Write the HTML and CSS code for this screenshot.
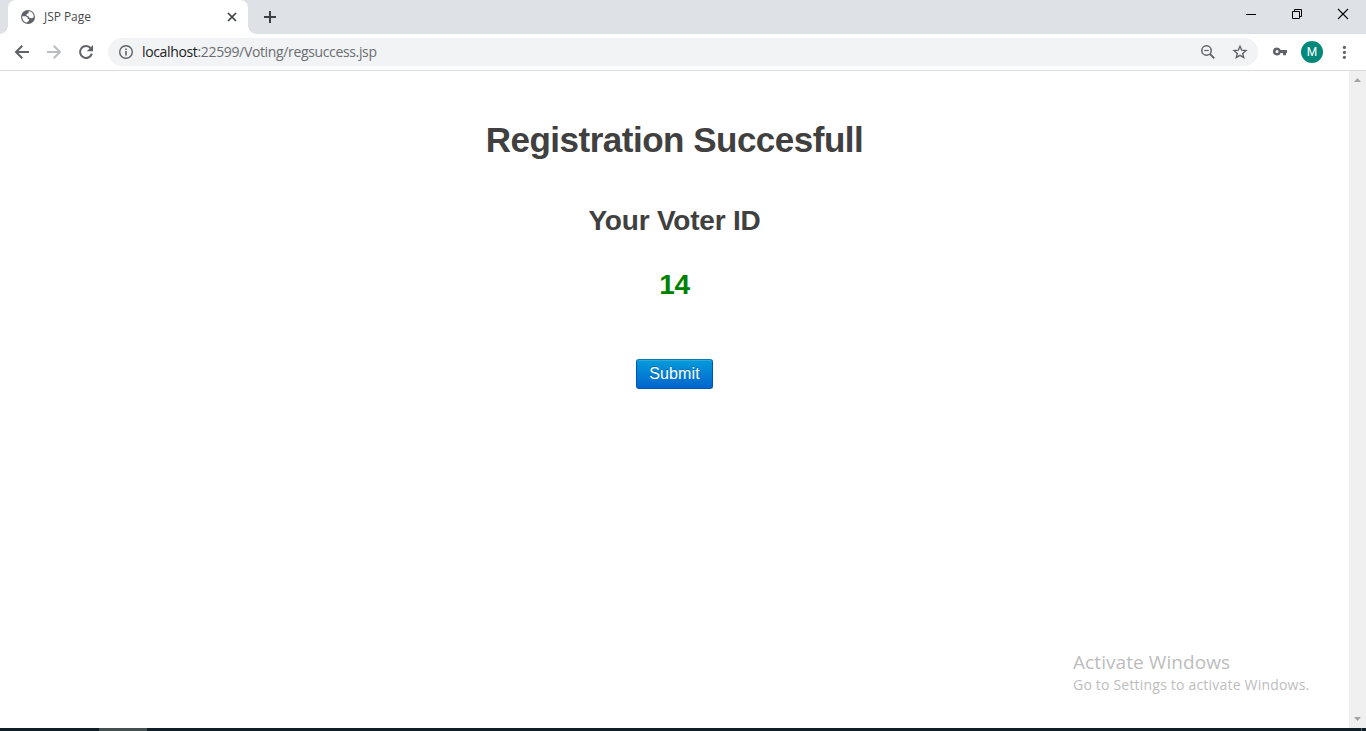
FILE: index.html
```html
<!DOCTYPE html>
<html lang="en">
<head>
<meta charset="utf-8">
<title>JSP Page</title>
<link rel="stylesheet" href="styles.css">
</head>
<body>
<div class="browser">
  <header class="tabstrip">
    <div class="tab">
      <svg class="globe" width="16" height="16" viewBox="0 0 16 16"><circle cx="8" cy="8" r="7" fill="#5f6368"/><path d="M8.700 2.300C11 2.200 13.300 4.200 13.700 6.500L13.500 8.500L11.700 9.200L9.200 8.800L8.400 7.200L6.500 6.700L6.700 5L8.500 4.300ZM2.200 7.200H5.500L7.500 8.300L7.700 9.700L9.300 10.400L8.800 11.800L7 13.600C4.300 13.300 2 11 2.200 7.200Z" fill="#fff"/></svg>
      <span class="tab-title">JSP Page</span>
      <svg class="tab-close" width="10" height="10" viewBox="0 0 10 10"><path d="M1 1L9 9M9 1L1 9" stroke="#3c4043" stroke-width="1.7"/></svg>
    </div>
    <svg class="new-tab" width="12" height="12" viewBox="0 0 12 12"><path d="M6 0V12M0 6H12" stroke="#3c4043" stroke-width="2"/></svg>
    <div class="window-controls">
      <svg width="46" height="30" viewBox="0 0 46 30"><path d="M18 14.5H28" stroke="#000"/></svg>
      <svg width="46" height="30" viewBox="0 0 46 30"><path d="M18.500 11.500H25.500V18.500H18.500ZM20.500 11V9.500H27.500V16.500H26" fill="none" stroke="#000"/></svg>
      <svg width="46" height="30" viewBox="0 0 46 30"><path d="M18 9L28 19M28 9L18 19" stroke="#000" stroke-width="1.1"/></svg>
    </div>
  </header>
  <nav class="toolbar">
    <svg class="nav-icon" width="16" height="16" viewBox="0 0 16 16"><path d="M15 8H2.500M8.300 1.700L2 8L8.300 14.300" fill="none" stroke="#5f6368" stroke-width="2"/></svg>
    <svg class="nav-icon" width="16" height="16" viewBox="0 0 16 16"><path d="M1 8H13.500M7.700 1.700L14 8L7.700 14.300" fill="none" stroke="#babcbe" stroke-width="2"/></svg>
    <svg class="nav-icon" width="16" height="16" viewBox="0 0 16 16"><path d="M12.800 4.300A6 6 0 1 0 13.800 9.600" fill="none" stroke="#5f6368" stroke-width="2"/><path d="M15 1V7.200H8.800Z" fill="#5f6368"/></svg>
    <div class="address">
      <svg width="16" height="16" viewBox="0 0 16 16"><circle cx="8" cy="8" r="6.300" fill="none" stroke="#5f6368" stroke-width="1.400"/><path d="M8 7V11.500M8 4.500V6" stroke="#5f6368" stroke-width="1.600"/></svg>
      <span class="url"><span class="host">localhost</span>:22599/Voting/regsuccess.jsp</span>
      <svg class="zoom-icon" width="16" height="16" viewBox="0 0 16 16"><circle cx="6.500" cy="6.500" r="4.700" fill="none" stroke="#5f6368" stroke-width="1.500"/><path d="M4.200 6.500H8.800" stroke="#5f6368" stroke-width="1.200"/><path d="M10 10L14.300 14.300" stroke="#5f6368" stroke-width="1.800"/></svg>
      <svg class="star" width="16" height="16" viewBox="0 0 16 16"><path d="M8 2.200L9.700 6.200L14 6.600L10.700 9.400L11.700 13.600L8 11.400L4.300 13.600L5.300 9.400L2 6.600L6.300 6.200Z" fill="none" stroke="#5f6368" stroke-width="1.400"/></svg>
    </div>
    <svg class="key" width="16" height="16" viewBox="0 0 16 16"><path fill-rule="evenodd" d="M5 3.500A4 4 0 1 0 8.700 9H11V11.300H14V9H15V6H8.700A4 4 0 0 0 5 3.500ZM5 6A1.500 1.500 0 1 1 5 9A1.500 1.500 0 1 1 5 6Z" fill="#5f6368"/></svg>
    <span class="avatar">M</span>
    <svg class="menu" width="4" height="14" viewBox="0 0 4 14" fill="#5f6368"><circle cx="2.400" cy="2.400" r="1.600"/><circle cx="2.400" cy="7.400" r="1.600"/><circle cx="2.400" cy="12.300" r="1.600"/></svg>
  </nav>
  <div class="viewport">
    <main class="page">
      <h1>Registration Succesfull</h1>
      <h2>Your Voter ID</h2>
      <h2 class="voter-id">14</h2>
      <button class="submit">Submit</button>
    </main>
    <div class="scrollbar">
      <svg width="17" height="17" viewBox="0 0 17 17"><path d="M5 11L8.500 7L12 11Z" fill="#a3a3a3"/></svg>
      <svg width="17" height="17" viewBox="0 0 17 17"><path d="M5 6L8.500 10L12 6Z" fill="#a3a3a3"/></svg>
    </div>
  </div>
  <footer class="taskbar"><span class="task-active"></span><span class="show-desktop"></span></footer>
  <aside class="watermark">
    <div class="wm-title">Activate Windows</div>
    <div class="wm-text">Go to Settings to activate Windows.</div>
  </aside>
</div>
</body>
</html>
```
FILE: styles.css
```css
* { box-sizing: border-box; }
body { margin: 0; font-family: "Liberation Sans", Arial, sans-serif; }
svg { display: block; flex: none; }
.browser { position: relative; width: 1366px; height: 731px; display: flex; flex-direction: column; background: #fff; overflow: hidden; }
.tabstrip { height: 34px; flex: none; display: flex; background: #dee1e6; padding-left: 8px; }
.tab { position: relative; width: 240px; height: 34px; display: flex; align-items: center; padding: 0 11px 0 12px; background: #fff; border-radius: 8px 8px 0 0; }
.tab::before, .tab::after { content: ""; position: absolute; bottom: 0; width: 8px; height: 8px; }
.tab::before { left: -8px; background: radial-gradient(circle at 0 0, transparent 7.5px, #fff 8px); }
.tab::after { right: -8px; background: radial-gradient(circle at 100% 0, transparent 7.5px, #fff 8px); }
.tab-title { margin-left: 8px; font: 12px/16px "Open Sans", sans-serif; letter-spacing: -0.05px; color: #45494d; }
.tab-close { margin-left: auto; }
.new-tab { margin: 11px 0 0 16px; }
.window-controls { display: flex; margin-left: auto; }
.toolbar { height: 37px; flex: none; display: flex; align-items: center; padding: 0 20px 0 14px; border-bottom: 1px solid #dadce0; }
.nav-icon { margin-right: 16px; }
.address { width: 1150px; height: 28px; margin-left: -2px; display: flex; align-items: center; padding: 0 10px; background: #f1f3f4; border-radius: 14px; }
.url { margin-left: 8px; font: 14px/20px "Open Sans", sans-serif; letter-spacing: -0.35px; color: #6a6e72; }
.host { color: #202124; }
.zoom-icon { margin-left: auto; }
.star { margin-left: 16px; }
.key { margin-left: 14px; }
.avatar { width: 22px; height: 22px; margin-left: 13px; border-radius: 50%; background: #00897b; color: #fff; font: 12px/22px Roboto, sans-serif; text-align: center; }
.menu { margin-left: auto; }
.viewport { flex: 1; display: flex; }
.page { flex: 1; display: flex; flex-direction: column; align-items: center; color: #404040; }
h1 { margin: 48px 0 0; font-size: 35px; line-height: 42px; letter-spacing: -0.5px; }
h2 { margin: 43px 0 0; font-size: 28px; line-height: 34px; letter-spacing: -0.2px; }
.voter-id { margin-top: 30px; color: #008000; }
.submit { width: 77px; height: 30px; margin-top: 57px; padding: 0 0 1px; border: 1px solid #0055b0; border-top-color: #0778b0; border-radius: 3px; background: linear-gradient(#049cdb, #0064cd); color: #fff; font: 16px/20px "Liberation Sans", Arial, sans-serif; letter-spacing: 0.1px; text-shadow: 0 -1px 0 rgba(0,0,0,.25); box-shadow: inset 0 1px 0 rgba(255,255,255,.15); }
.scrollbar { width: 17px; display: flex; flex-direction: column; justify-content: space-between; background: #f0f0f0; }
.taskbar { height: 3px; flex: none; display: flex; justify-content: space-between; padding: 0 4px 0 99px; background: #101e28; }
.task-active { width: 48px; background: #44504f; }
.show-desktop { width: 1px; background: #59636a; }
.watermark { position: absolute; left: 1073px; top: 650px; font-family: "Open Sans", sans-serif; color: #bdbdbd; white-space: nowrap; }
.wm-title { font-size: 19px; line-height: 24px; letter-spacing: 0.08px; }
.wm-text { font-size: 14px; line-height: 22px; letter-spacing: 0.2px; }
```
